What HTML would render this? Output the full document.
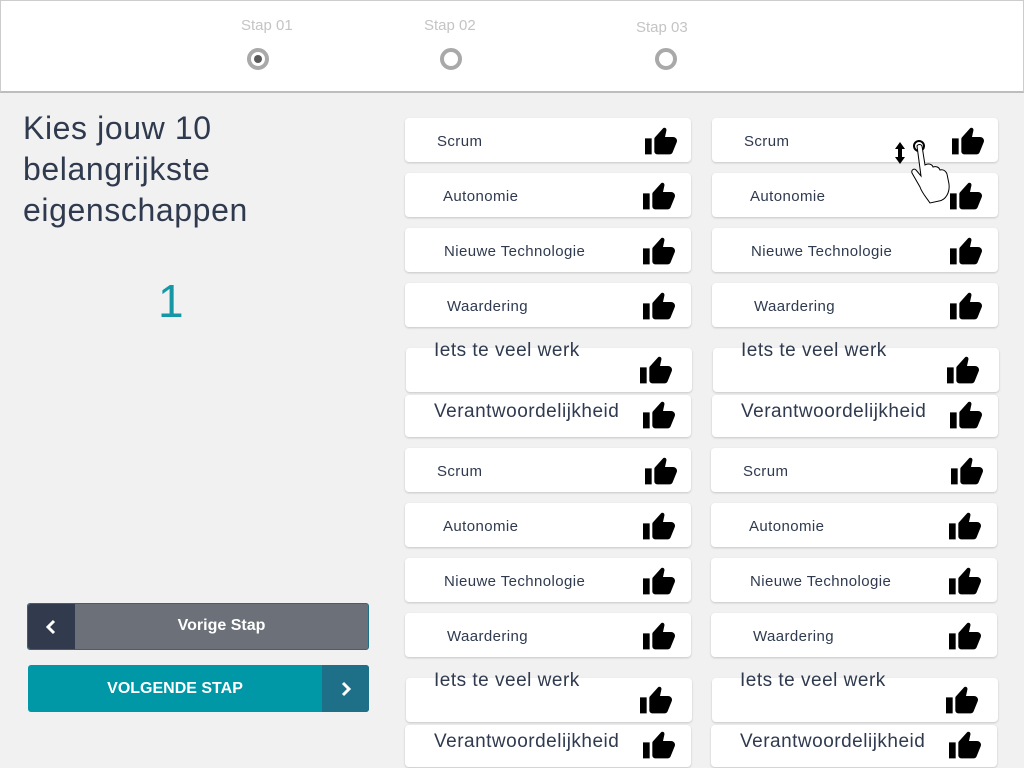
<!DOCTYPE html>
<html><head><meta charset="utf-8"><style>
*{margin:0;padding:0;box-sizing:border-box}
body{width:1024px;height:768px;background:#f1f1f1;font-family:"Liberation Sans",Arial,sans-serif;position:relative;overflow:hidden;color:#2f3a4f}
.hdr{position:absolute;left:0;top:0;width:1024px;height:93px;background:#fff;border:1px solid #ccc;border-bottom:2px solid #bdbdbd}
.st{position:absolute;font-size:15px;color:#c4c4c4}
.rad{position:absolute;width:22px;height:22px;border:4px solid #a9a9a9;border-radius:50%;background:#fff}
.rad.on::after{content:"";position:absolute;left:3px;top:3px;width:8px;height:8px;border-radius:50%;background:#5a5a5a}
h1{position:absolute;left:23px;top:108px;font-weight:normal;font-size:32px;letter-spacing:0.6px;line-height:41px;color:#2f3a4f}
.num{position:absolute;left:158px;top:274px;font-size:46px;color:#1597a6}
.card{position:absolute;background:#fff;border-radius:4px;box-shadow:0 1px 2px rgba(0,0,0,.18);width:286px}
.t{position:absolute;font-size:15px;letter-spacing:0.4px;white-space:nowrap}
.t.b{font-size:19px;letter-spacing:0.5px}
.th{position:absolute;width:32px;height:30px}
.btn1{position:absolute;left:27px;top:603px;width:342px;height:47px;background:#6b7079;border:1px solid #1c6f86;border-radius:3px;color:#fff}
.btn2{position:absolute;left:28px;top:665px;width:341px;height:47px;background:#0097a7;border-radius:3px;color:#fff}
</style></head><body>
<div class="hdr"></div>
<div class="st" style="left:241px;top:17px">Stap 01</div>
<div class="st" style="left:424px;top:17px">Stap 02</div>
<div class="st" style="left:636px;top:19px">Stap 03</div>
<div class="rad on" style="left:247px;top:48px"></div>
<div class="rad" style="left:440px;top:48px"></div>
<div class="rad" style="left:655px;top:48px"></div>

<h1>Kies jouw 10<br>belangrijkste<br>eigenschappen</h1>
<div class="num">1</div>

<div class="btn1"><div style="position:absolute;left:0;top:0;width:47px;height:45px;background:#323a4e;border-radius:3px 0 0 3px"></div>
<svg style="position:absolute;left:17px;top:15px" width="12" height="16" viewBox="0 0 12 16"><path d="M9 2L3 8l6 6" stroke="#fff" stroke-width="3" fill="none"/></svg>
<div style="position:absolute;left:47px;right:0;top:13px;text-align:center;font-size:16px;font-weight:bold">Vorige Stap</div></div>
<div class="btn2"><div style="position:absolute;left:0;width:294px;top:15px;text-align:center;font-size:16px;font-weight:bold">VOLGENDE STAP</div>
<div style="position:absolute;right:0;top:0;width:47px;height:47px;background:#1e7089;border-radius:0 3px 3px 0"></div>
<svg style="position:absolute;right:17px;top:16px" width="12" height="16" viewBox="0 0 12 16"><path d="M3 2l6 6-6 6" stroke="#fff" stroke-width="3" fill="none"/></svg></div>

<svg width="0" height="0" style="position:absolute"><defs><symbol id="tu" viewBox="0 0 24 22"><path d="M0 9h5v12H0z M7 9.5c0-.6.2-1 .6-1.4L13.5 1.5c.9-.9 2.6-.2 2.6 1.1 0 .3 0 .5-.1.8L15 8h6c1.6 0 3 1.3 3 2.8 0 .5-.1.9-.3 1.3l-3 7.4C20.3 20.4 19.4 21 18.4 21H9.2C8 21 7 20 7 18.8z" fill="#000"/></symbol></defs></svg>

<!-- left column -->
<div class="card" style="left:405px;top:118px;height:44px"></div><div class="t" style="left:437px;top:133px">Scrum</div><svg class="th" style="left:645px;top:126px"><use href="#tu"/></svg>
<div class="card" style="left:405px;top:173px;height:44px"></div><div class="t" style="left:443px;top:188px">Autonomie</div><svg class="th" style="left:643px;top:181px"><use href="#tu"/></svg>
<div class="card" style="left:405px;top:228px;height:44px"></div><div class="t" style="left:444px;top:243px">Nieuwe Technologie</div><svg class="th" style="left:643px;top:236px"><use href="#tu"/></svg>
<div class="card" style="left:405px;top:283px;height:44px"></div><div class="t" style="left:447px;top:298px">Waardering</div><svg class="th" style="left:643px;top:291px"><use href="#tu"/></svg>
<div class="card" style="left:406px;top:348px;height:44px"></div><div class="t b" style="left:434px;top:340px">Iets te veel werk</div><svg class="th" style="left:640px;top:355px"><use href="#tu"/></svg>
<div class="card" style="left:405px;top:395px;height:42px"></div><div class="t b" style="left:434px;top:401px">Verantwoordelijkheid</div><svg class="th" style="left:643px;top:400px"><use href="#tu"/></svg>
<div class="card" style="left:405px;top:448px;height:44px"></div><div class="t" style="left:437px;top:463px">Scrum</div><svg class="th" style="left:645px;top:456px"><use href="#tu"/></svg>
<div class="card" style="left:405px;top:503px;height:44px"></div><div class="t" style="left:443px;top:518px">Autonomie</div><svg class="th" style="left:643px;top:511px"><use href="#tu"/></svg>
<div class="card" style="left:405px;top:558px;height:44px"></div><div class="t" style="left:444px;top:573px">Nieuwe Technologie</div><svg class="th" style="left:643px;top:566px"><use href="#tu"/></svg>
<div class="card" style="left:405px;top:613px;height:44px"></div><div class="t" style="left:447px;top:628px">Waardering</div><svg class="th" style="left:643px;top:621px"><use href="#tu"/></svg>
<div class="card" style="left:406px;top:678px;height:44px"></div><div class="t b" style="left:434px;top:670px">Iets te veel werk</div><svg class="th" style="left:640px;top:685px"><use href="#tu"/></svg>
<div class="card" style="left:405px;top:725px;height:42px"></div><div class="t b" style="left:434px;top:731px">Verantwoordelijkheid</div><svg class="th" style="left:643px;top:730px"><use href="#tu"/></svg>

<!-- right column -->
<div class="card" style="left:712px;top:118px;height:44px"></div><div class="t" style="left:744px;top:133px">Scrum</div><svg class="th" style="left:952px;top:126px"><use href="#tu"/></svg>
<div class="card" style="left:712px;top:173px;height:44px"></div><div class="t" style="left:750px;top:188px">Autonomie</div><svg class="th" style="left:950px;top:181px"><use href="#tu"/></svg>
<div class="card" style="left:712px;top:228px;height:44px"></div><div class="t" style="left:751px;top:243px">Nieuwe Technologie</div><svg class="th" style="left:950px;top:236px"><use href="#tu"/></svg>
<div class="card" style="left:712px;top:283px;height:44px"></div><div class="t" style="left:754px;top:298px">Waardering</div><svg class="th" style="left:950px;top:291px"><use href="#tu"/></svg>
<div class="card" style="left:713px;top:348px;height:44px"></div><div class="t b" style="left:741px;top:340px">Iets te veel werk</div><svg class="th" style="left:947px;top:355px"><use href="#tu"/></svg>
<div class="card" style="left:712px;top:395px;height:42px"></div><div class="t b" style="left:741px;top:401px">Verantwoordelijkheid</div><svg class="th" style="left:950px;top:400px"><use href="#tu"/></svg>
<div class="card" style="left:711px;top:448px;height:44px"></div><div class="t" style="left:743px;top:463px">Scrum</div><svg class="th" style="left:951px;top:456px"><use href="#tu"/></svg>
<div class="card" style="left:711px;top:503px;height:44px"></div><div class="t" style="left:749px;top:518px">Autonomie</div><svg class="th" style="left:949px;top:511px"><use href="#tu"/></svg>
<div class="card" style="left:711px;top:558px;height:44px"></div><div class="t" style="left:750px;top:573px">Nieuwe Technologie</div><svg class="th" style="left:949px;top:566px"><use href="#tu"/></svg>
<div class="card" style="left:711px;top:613px;height:44px"></div><div class="t" style="left:753px;top:628px">Waardering</div><svg class="th" style="left:949px;top:621px"><use href="#tu"/></svg>
<div class="card" style="left:712px;top:678px;height:44px"></div><div class="t b" style="left:740px;top:670px">Iets te veel werk</div><svg class="th" style="left:946px;top:685px"><use href="#tu"/></svg>
<div class="card" style="left:711px;top:725px;height:42px"></div><div class="t b" style="left:740px;top:731px">Verantwoordelijkheid</div><svg class="th" style="left:949px;top:730px"><use href="#tu"/></svg>

<!-- drag hand -->
<svg style="position:absolute;left:890px;top:136px" width="80" height="82" viewBox="0 0 80 82">
<path d="M10 6l-5 7h3v8H5l5 7 5-7h-3v-8h3z" fill="#000"/>
<circle cx="29" cy="10" r="5" fill="none" stroke="#000" stroke-width="2"/>
<path d="M27 10c1-2 4-2 5 0l3 19c3-2 7-1 8 2 3-1 6 0 7 3 3-1 6 1 7 4l2 10c1 8-3 16-10 17l-9 2c-4-6-8-10-10-16l-8-14c-1-3 2-5 4-3l5 6z" fill="#fff" stroke="#000" stroke-width="1"/>
</svg>
</body></html>
